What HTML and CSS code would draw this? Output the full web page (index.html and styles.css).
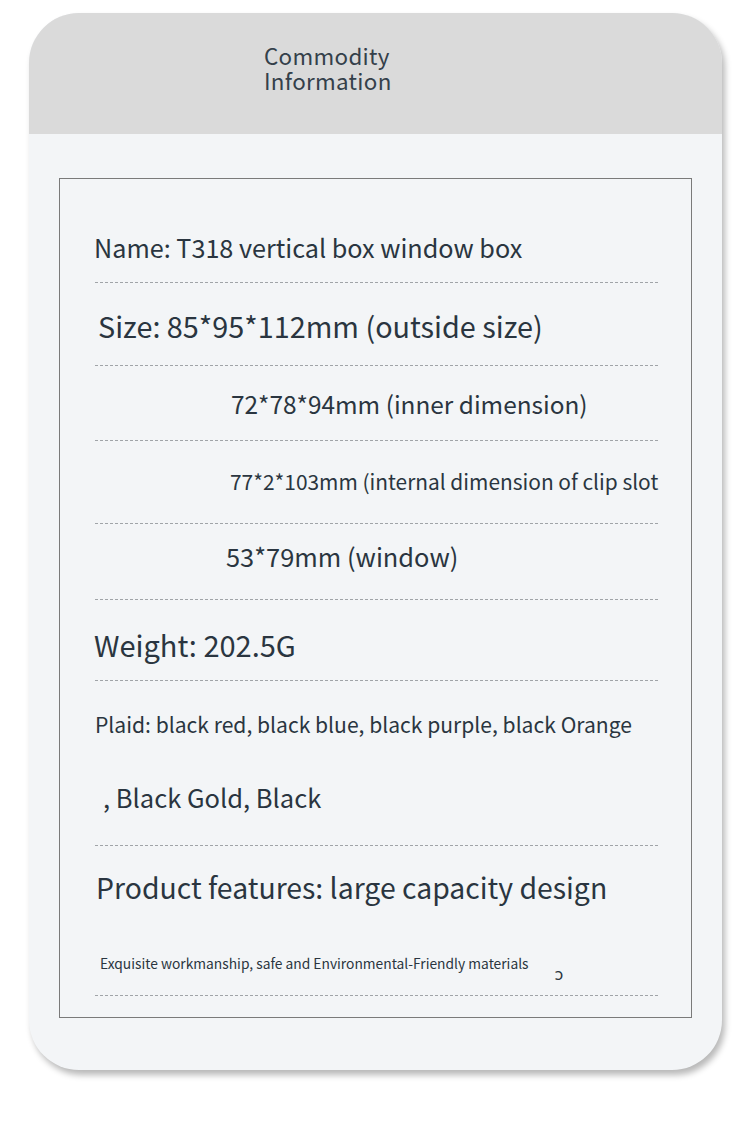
FILE: index.html
```html
<!DOCTYPE html>
<html>
<head>
<meta charset="utf-8">
<link rel="stylesheet" href="styles.css">
</head>
<body>
<div class="card">
  <div class="card-head">
    <div class="title"><span class="title-line">Commodity</span><span class="title-line">Information</span></div>
  </div>
  <div class="card-body">
    <div class="box">
      <div class="row r1"><span class="t t-name">Name: T318 vertical box window box</span></div>
      <div class="row r2"><span class="t t-size">Size: 85*95*112mm (outside size)</span></div>
      <div class="row r3"><span class="t t-inner">72*78*94mm (inner dimension)</span></div>
      <div class="row r4"><span class="t t-clip">77*2*103mm (internal dimension of clip slot</span></div>
      <div class="row r5"><span class="t t-win">53*79mm (window)</span></div>
      <div class="row r6"><span class="t t-weight">Weight: 202.5G</span></div>
      <div class="row r7">
        <span class="t t-plaid">Plaid: black red, black blue, black purple, black Orange</span>
        <span class="t t-gold">, Black Gold, Black</span>
      </div>
      <div class="row r8">
        <span class="t t-feat">Product features: large capacity design</span>
        <div class="ex-line">
          <span class="t t-ex">Exquisite workmanship, safe and Environmental-Friendly materials</span>
          <span class="t t-dot">ɔ</span>
        </div>
      </div>
    </div>
  </div>
</div>
</body>
</html>
```
FILE: styles.css
```css
html, body {
  margin: 0;
  padding: 0;
  background: #ffffff;
}
body {
  width: 750px;
  height: 1123px;
  font-family: "Noto Sans CJK SC", "Noto Sans", sans-serif;
  color: #2a3540;
}
.card {
  margin: 13px 28px 0 29px;
  width: 693px;
  height: 1057px;
  border-radius: 50px;
  overflow: hidden;
  background: #f3f5f7;
  box-shadow: 3px 5px 6px rgba(0, 0, 0, 0.28);
}
.card-head {
  height: 121px;
  background: #dadada;
  box-sizing: border-box;
  padding: 30px 0 0 235px;
}
.title {
  font-size: 22.4px;
  color: #34404a;
  letter-spacing: 0.3px;
  display: flex;
  flex-direction: column;
}
.title-line {
  display: block;
  height: 25px;
  line-height: 24px;
}
.card-body {
  padding: 44px 29px 0 30px;
}
.box {
  border: 1px solid #7a7a7a;
  width: 633px;
  height: 840px;
  box-sizing: border-box;
  display: flex;
  flex-direction: column;
}
.row {
  margin: 0 33px 0 35px;
  border-bottom: 1px dashed #a0a4a8;
  display: flex;
  flex-direction: column;
  white-space: nowrap;
  box-sizing: border-box;
}
.t {
  display: block;
  line-height: 40px;
  height: 40px;
}
.r1 { height: 104px; }
.r2 { height: 83px; }
.r3 { height: 75px; }
.r4 { height: 83px; }
.r5 { height: 76px; }
.r6 { height: 81px; }
.r7 { height: 165px; }
.r8 { height: 150px; }

.t-name { margin-top: 48px; font-size: 25.2px; margin-left: -1px; }
.t-size { margin-top: 23px; font-size: 28.8px; margin-left: 3px; }
.t-inner { margin-top: 18px; font-size: 24.4px; margin-left: 136px; }
.t-clip { margin-top: 20px; font-size: 20.9px; margin-left: 135px; }
.t-win { margin-top: 12px; font-size: 25.4px; margin-left: 131px; }
.t-weight { margin-top: 24px; font-size: 29px; margin-left: -1px; }
.t-plaid { margin-top: 23px; font-size: 21.1px; }
.t-gold { margin-top: 33px; font-size: 25.5px; margin-left: 8px; }
.t-feat { margin-top: 21px; font-size: 28.4px; margin-left: 1px; }
.ex-line {
  display: flex;
  margin-top: 36px;
}
.t-ex { font-size: 13.8px; margin-left: 5px; }
.t-dot {
  font-family: "DejaVu Sans", sans-serif;
  font-size: 16px;
  margin-left: 26px;
  margin-top: 12px;
}
```
